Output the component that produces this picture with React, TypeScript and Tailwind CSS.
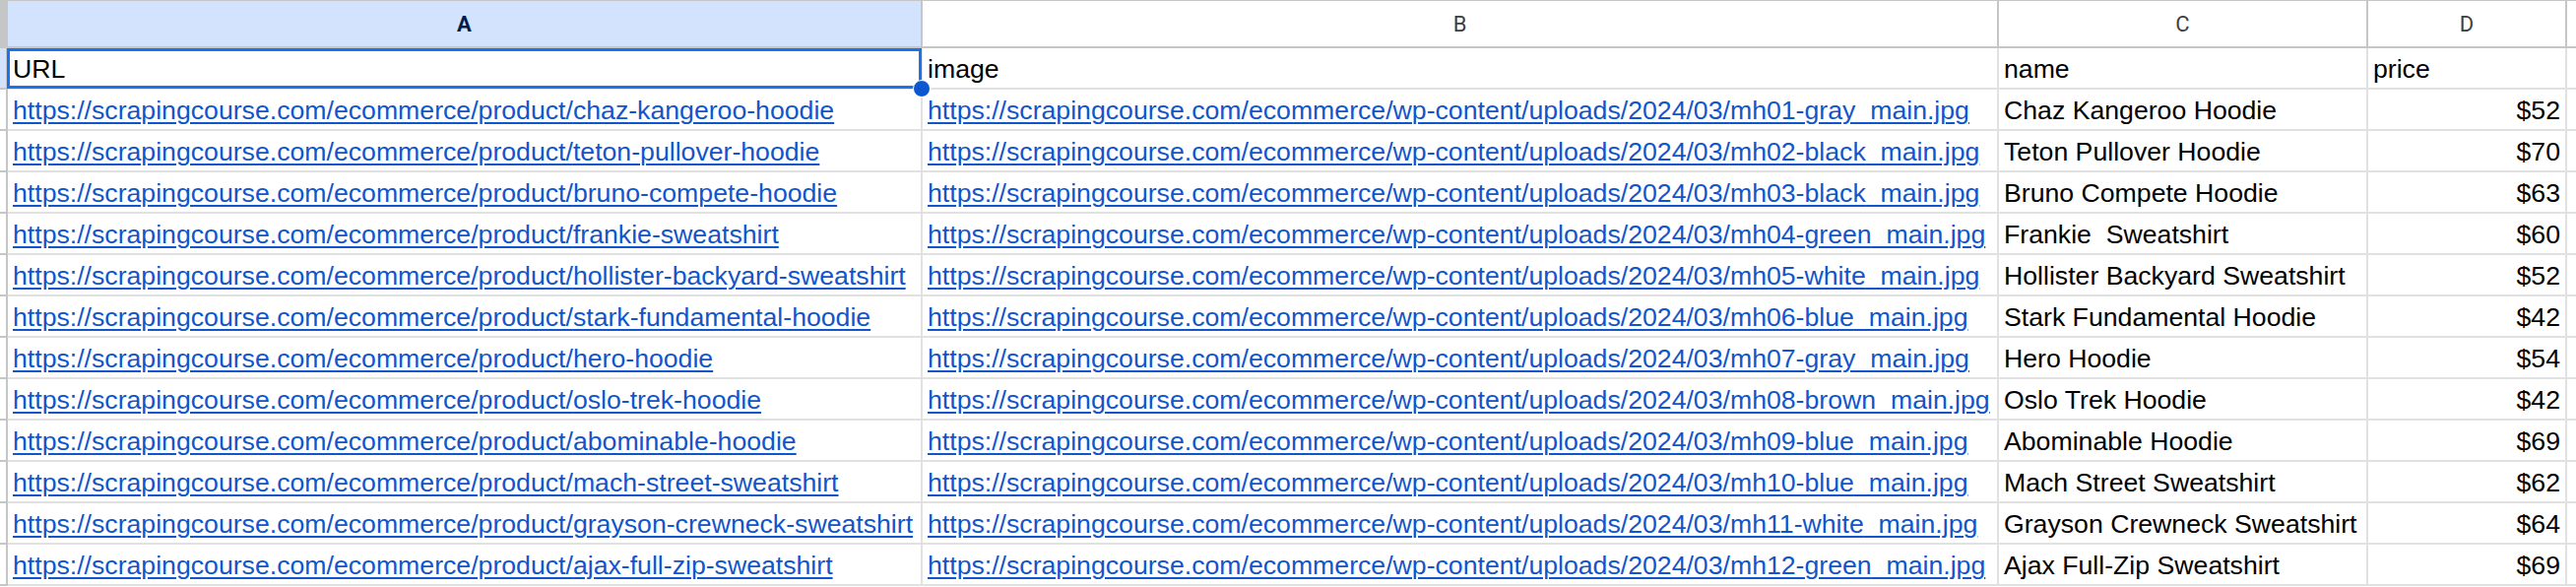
const rows = [
  ["chaz-kangeroo-hoodie", "mh01-gray", "Chaz Kangeroo Hoodie", "$52"],
  ["teton-pullover-hoodie", "mh02-black", "Teton Pullover Hoodie", "$70"],
  ["bruno-compete-hoodie", "mh03-black", "Bruno Compete Hoodie", "$63"],
  ["frankie-sweatshirt", "mh04-green", "Frankie  Sweatshirt", "$60"],
  ["hollister-backyard-sweatshirt", "mh05-white", "Hollister Backyard Sweatshirt", "$52"],
  ["stark-fundamental-hoodie", "mh06-blue", "Stark Fundamental Hoodie", "$42"],
  ["hero-hoodie", "mh07-gray", "Hero Hoodie", "$54"],
  ["oslo-trek-hoodie", "mh08-brown", "Oslo Trek Hoodie", "$42"],
  ["abominable-hoodie", "mh09-blue", "Abominable Hoodie", "$69"],
  ["mach-street-sweatshirt", "mh10-blue", "Mach Street Sweatshirt", "$62"],
  ["grayson-crewneck-sweatshirt", "mh11-white", "Grayson Crewneck Sweatshirt", "$64"],
  ["ajax-full-zip-sweatshirt", "mh12-green", "Ajax Full-Zip Sweatshirt", "$69"],
];

const base =
  "h-full border-r-2 border-b-2 border-[#e1e1e1] flex items-end pb-[4px] px-[5px] whitespace-pre leading-[30px]";
const cell = `${base} overflow-hidden`;
const link = "text-[#1155cc] underline decoration-[2px] underline-offset-[3px]";

export default function App() {
  return (
    <div className="w-[2616px] h-[596px] overflow-hidden bg-white text-black text-[26.67px] font-['Liberation_Sans',Arial,sans-serif]">
      {/* column headers */}
      <div className="flex h-[49px] border-t border-b-2 border-[#c4c7c5] font-['Roboto',sans-serif] text-[22px] text-[#3c4043]">
        <div className="w-[8px] shrink-0 bg-[#c4c7c5] border-r-2 border-[#c4c7c5]" />
        <div className="w-[929px] shrink-0 bg-[#d3e3fd] border-r-2 border-[#c4c7c5] flex items-center justify-center font-bold text-[#041e49]">
          A
        </div>
        <div className="w-[1093px] shrink-0 border-r-2 border-[#c4c7c5] flex items-center justify-center">B</div>
        <div className="w-[375px] shrink-0 border-r-2 border-[#c4c7c5] flex items-center justify-center">C</div>
        <div className="w-[202px] shrink-0 border-r-2 border-[#c4c7c5] flex items-center justify-center">D</div>
        <div className="flex-1" />
      </div>

      {/* header row */}
      <div className="flex h-[42px] relative z-10">
        <div className="w-[8px] shrink-0 h-full bg-[#d3e3fd] border-r-2 border-b-2 border-[#c4c7c5]" />
        <div className={`w-[929px] shrink-0 relative ${base}`}>
          URL
          <div className="absolute -left-[1px] top-0 -right-[1px] -bottom-[1px] border-[3px] border-[#1a73e8]" />
          <div className="absolute -right-[10px] -bottom-[10px] w-[18px] h-[18px] rounded-full bg-[#0b57d0] border border-white" />
        </div>
        <div className={`w-[1093px] shrink-0 ${cell}`}>image</div>
        <div className={`w-[375px] shrink-0 ${cell}`}>name</div>
        <div className={`w-[202px] shrink-0 ${cell}`}>price</div>
        <div className={`flex-1 ${cell}`} />
      </div>

      {rows.map(([slug, img, name, price]) => (
        <div key={slug} className="flex h-[42px]">
          <div className="w-[8px] shrink-0 h-full border-r-2 border-b-2 border-[#c4c7c5]" />
          <div className={`w-[929px] shrink-0 ${cell}`}>
            <span className={link}>https://scrapingcourse.com/ecommerce/product/{slug}</span>
          </div>
          <div className={`w-[1093px] shrink-0 ${cell}`}>
            <span className={link}>
              https://scrapingcourse.com/ecommerce/wp-content/uploads/2024/03/{img}_main.jpg
            </span>
          </div>
          <div className={`w-[375px] shrink-0 ${cell}`}>{name}</div>
          <div className={`w-[202px] shrink-0 justify-end ${cell}`}>{price}</div>
          <div className={`flex-1 ${cell}`} />
        </div>
      ))}
    </div>
  );
}
